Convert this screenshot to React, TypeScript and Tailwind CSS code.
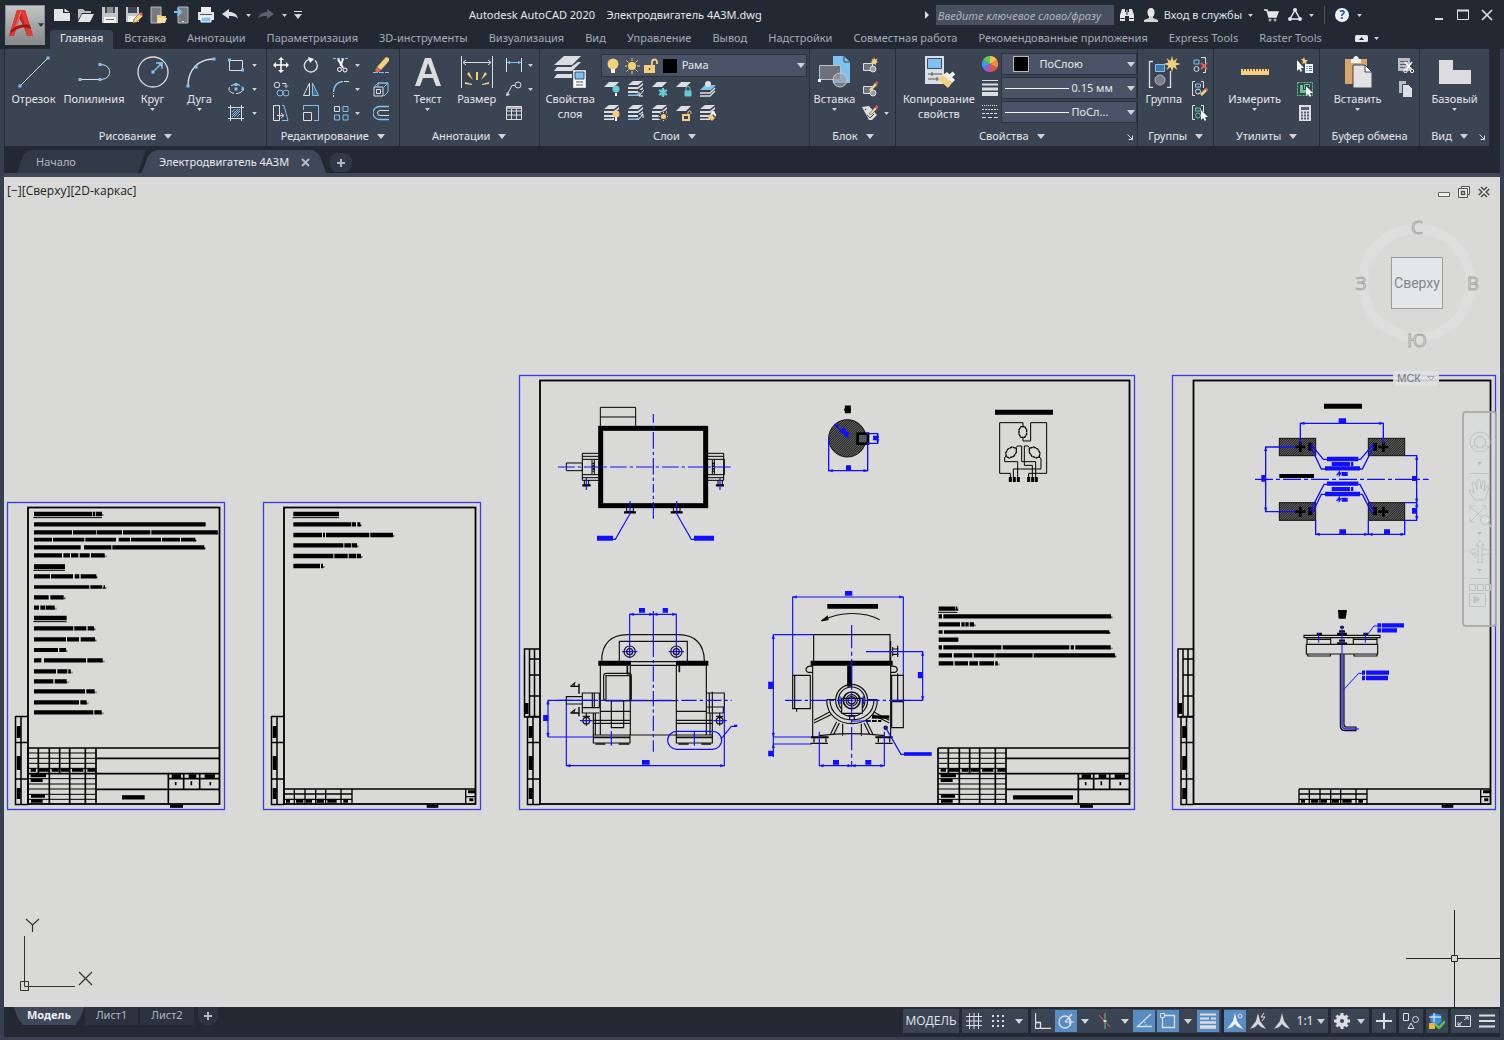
import { ReactNode } from "react"
import clsx from "clsx"

const W = "#dcdfe2"
const B = "#7fc1f0"
const Y = "#f6cf7c"
const R = "#e0605a"
const G = "#5fc98a"
const T = "#62cfd4"
const BLUE = "#1010ff"

/* ---------- shared bits ---------- */

interface IcoProps {
  s?: number
  children: ReactNode
}

function Ico({ s = 16, children }: IcoProps) {
  return (
    <svg width={s} height={s} viewBox={`0 0 ${s} ${s}`} fill="none" stroke={W} className="shrink-0" aria-hidden="true">
      {children}
    </svg>
  )
}

function Caret({ big = false }: { big?: boolean }) {
  return (
    <svg width={big ? 8 : 5} height={big ? 5 : 3} viewBox="0 0 8 5" className="shrink-0" aria-hidden="true">
      <path d="M0 0h8L4 5z" fill="#cfd3d8" />
    </svg>
  )
}

/* ---------- quick access toolbar ---------- */

const quickIcons: { name: string; icon: ReactNode }[] = [
  {
    name: "Создать",
    icon: (
      <Ico s={18}>
        <path d="M1 3h9v4h7v8H1z" fill="#e4e4e4" stroke="none" />
        <path d="M11.500 2.500l5 3.500h-5z" fill="#e4e4e4" stroke="none" />
      </Ico>
    ),
  },
  {
    name: "Открыть",
    icon: (
      <Ico s={18}>
        <path d="M1 3h5l2 2h6v2H5L1 14z" fill="#b9bdc2" stroke="none" />
        <path d="M5 8h12l-4 8H1z" fill="#e4e4e4" stroke="none" />
      </Ico>
    ),
  },
  {
    name: "Сохранить",
    icon: (
      <Ico s={18}>
        <path d="M1 1h16v16H1z" fill="#c3c5c8" stroke="none" />
        <path d="M4 1h10v6H4z" fill="#41464e" stroke="none" />
        <path d="M6 1h6v6H6z" fill="#8c9096" stroke="none" />
        <path d="M3 11h12v6H3z" fill="#f3f3f3" stroke="none" />
        <path d="M5 13.500h8" stroke="#666" />
      </Ico>
    ),
  },
  {
    name: "Сохранить как",
    icon: (
      <Ico s={18}>
        <path d="M1 1h13v15H1z" fill="#c3c5c8" stroke="none" />
        <path d="M3 1h9v6H3z" fill="#41464e" stroke="none" />
        <path d="M3 10h8v6H3z" fill="#f3f3f3" stroke="none" />
        <path d="M8 17l1-4 6-6 3 3-6 6z" fill={Y} stroke="#5d4b2d" strokeWidth=".6" />
        <path d="M14 8l2-2 2 2-2 2z" fill={R} stroke="none" />
      </Ico>
    ),
  },
  {
    name: "Открыть с мобильного",
    icon: (
      <Ico s={18}>
        <path d="M2 1h10v16H2z" fill="#777b80" stroke="#b5b8bc" />
        <path d="M8 9h4l1 1h4l-1 7H8z" fill={Y} stroke="none" />
        <path d="M10 12h8l-2 5H8z" fill="#ffe0a0" stroke="none" />
      </Ico>
    ),
  },
  {
    name: "Сохранить на мобильный",
    icon: (
      <Ico s={18}>
        <path d="M5 1h10v16H5z" fill="#777b80" stroke="#b5b8bc" />
        <path d="M9 15.500h2" />
        <path d="M1 6h6m-2.500-3.500L8 6 4.500 9.500" stroke={B} strokeWidth="2" />
      </Ico>
    ),
  },
  {
    name: "Печать",
    icon: (
      <Ico s={18}>
        <path d="M4 1h10v5H4z" fill="#f0f0f0" stroke="none" />
        <path d="M1 6h16v8H1z" fill="#e4e4e4" stroke="none" />
        <path d="M3 8.500h12" stroke="#555b64" />
        <path d="M4 11h10v5H4z" fill={B} stroke="#fff" />
      </Ico>
    ),
  },
]

function QuickToolbar() {
  return (
    <div className="flex items-center">
      {quickIcons.map((q) => (
        <button key={q.name} aria-label={q.name} className="flex h-6 w-6 items-center justify-center">
          {q.icon}
        </button>
      ))}
      <button aria-label="Отменить" className="flex h-6 w-9 items-center justify-between px-[3px]">
        <Ico s={18}>
          <path d="M1 8l7-5v3c5 0 8 2 9 7-2-3-5-3-9-3v3z" fill={W} stroke="none" />
        </Ico>
        <Caret />
      </button>
      <button aria-label="Повторить" className="flex h-6 w-9 items-center justify-between px-[3px]">
        <Ico s={18}>
          <path d="M17 8l-7-5v3c-5 0-8 2-9 7 2-3 5-3 9-3v3z" fill="#59616d" stroke="none" />
        </Ico>
        <Caret />
      </button>
      <button aria-label="Настройка панели" className="flex h-6 w-4 flex-col items-center justify-center gap-0.5">
        <span className="h-px w-2 bg-[#dcdfe2]" />
        <Caret big />
      </button>
    </div>
  )
}

function TitleBar() {
  return (
    <div className="flex h-[30px] items-center">
      <QuickToolbar />
      <h1 className="flex-1 whitespace-pre text-center text-[11px] text-[#e3e6ea]">
        Autodesk AutoCAD 2020{"    "}Электродвигатель 4АЗМ.dwg
      </h1>
      <svg width="5" height="8" viewBox="0 0 5 8" aria-hidden="true">
        <path d="M0 0l4 4-4 4z" fill={W} />
      </svg>
      <input
        aria-label="Поиск"
        placeholder="Введите ключевое слово/фразу"
        className="ml-1.5 h-5 w-[178px] bg-[#47505f] px-0.5 font-['Open_Sans'] text-[11px] italic text-white placeholder:text-[#b3b9c2]"
      />
      <button aria-label="Найти" className="flex h-6 w-[26px] items-center justify-center">
        <Ico>
          <path d="M3 2h3v3h1V3h2v2h1V2h3l2 6v6h-5V9H6v5H1V8z" fill="#e6e6e6" stroke="none" />
          <path d="M1.500 11.500h4M10.500 11.500h4M8 3v5" stroke="#222933" />
        </Ico>
      </button>
      <button className="flex h-6 items-center gap-1.5 pl-1 text-[11px] text-[#dde0e5]">
        <Ico s={14}>
          <ellipse cx="7" cy="4.500" rx="3.500" ry="4.500" fill="#e6e6e6" stroke="none" />
          <path d="M5 8h4v2l5 2v2H0v-2l5-2z" fill="#d2d4d6" stroke="none" />
        </Ico>
        Вход в службы
        <Caret />
      </button>
      <button aria-label="Магазин" className="ml-1.5 flex h-6 w-6 items-center justify-center">
        <Ico>
          <path d="M1 3h3l2 7h7l2-5H5" stroke="#e6e6e6" strokeWidth="1.500" />
          <path d="M5 5h10l-2 5H6z" fill="#e6e6e6" stroke="none" />
          <circle cx="7" cy="13" r="1" />
          <circle cx="12" cy="13" r="1" />
        </Ico>
      </button>
      <button aria-label="Autodesk" className="flex h-6 items-center gap-1.5 pl-1">
        <Ico>
          <path d="M8 3L3 12h10z" stroke="#dfe6f5" strokeWidth="1.500" />
          <circle cx="8" cy="3" r="2" fill="#dfe6f5" stroke="none" />
          <circle cx="3" cy="12" r="2" fill="#dfe6f5" stroke="none" />
          <circle cx="13" cy="12" r="2" fill="#dfe6f5" stroke="none" />
        </Ico>
        <Caret />
      </button>
      <span className="mx-2.5 h-[18px] w-px bg-[#4b5462]" />
      <button aria-label="Справка" className="flex h-6 items-center gap-2">
        <span className="flex h-[14px] w-[14px] items-center justify-center rounded-full bg-[#eef1f6] text-[12px] font-bold leading-none text-[#2353b5]">
          ?
        </span>
        <Caret />
      </button>
      <div className="ml-[68px] mr-2 flex items-center gap-1.5">
        <button aria-label="Свернуть" className="flex h-6 w-[18px] items-center justify-center">
          <Ico s={12}>
            <path d="M2 10h8" strokeWidth="2" />
          </Ico>
        </button>
        <button aria-label="Развернуть" className="flex h-6 w-[18px] items-center justify-center">
          <Ico s={12}>
            <path d="M.5 1.500h11v9H.5z" />
            <path d="M0 1.500h12" strokeWidth="2" />
          </Ico>
        </button>
        <button aria-label="Закрыть" className="flex h-6 w-[18px] items-center justify-center">
          <Ico s={12}>
            <path d="M1 1l10 10M11 1L1 11" strokeWidth="1.700" />
          </Ico>
        </button>
      </div>
    </div>
  )
}

const ribbonTabs = [
  "Главная",
  "Вставка",
  "Аннотации",
  "Параметризация",
  "3D-инструменты",
  "Визуализация",
  "Вид",
  "Управление",
  "Вывод",
  "Надстройки",
  "Совместная работа",
  "Рекомендованные приложения",
  "Express Tools",
  "Raster Tools",
]

function Header() {
  return (
    <header className="flex">
      <button
        aria-label="Меню приложения"
        className="ml-[5px] mt-[5px] flex h-10 w-10 items-center gap-1 border border-[#8b8d90] bg-gradient-to-b from-[#c4c5c6] to-[#86888a] pl-[3px]"
      >
        <svg width="25" height="28" viewBox="0 0 25 28" className="-mt-1" aria-hidden="true">
          <path d="M8 1h8l8 26h-6l-3-9-5-9-3 10-2 8H0z" fill="#c3221f" />
          <path d="M8 1l-8 26h5L12 5l3 8 3 14h6L16 1z" fill="#dd3b34" />
          <path d="M2 21c6-5 12-7 19-5l1 4C15 17 9 18 1 25z" fill="#a31715" />
          <path d="M12 2L7 17" stroke="#f0736b" />
        </svg>
        <svg width="6" height="4" viewBox="0 0 8 5" aria-hidden="true">
          <path d="M0 0h8L4 5z" fill="#333" />
        </svg>
      </button>
      <div className="ml-[5px] flex-1">
        <TitleBar />
        <nav className="flex h-[19px] items-stretch gap-px text-[11px] leading-[16px] text-[#a5abb4]">
          {ribbonTabs.map((t, i) => (
            <button
              key={t}
              className={clsx("whitespace-nowrap px-[10px] pb-[3px]", i === 0 && "rounded-t-sm bg-[#3b4453] text-[#eceef1]")}
            >
              {t}
            </button>
          ))}
          <button aria-label="Свернуть ленту" className="ml-[22px] flex items-center gap-1.5 pb-0.5">
            <svg width="13" height="7" viewBox="0 0 13 7" aria-hidden="true">
              <rect width="13" height="7" rx="1.500" fill="#e4e6e9" />
              <path d="M4 5h5L6.500 2z" fill="#222933" />
            </svg>
            <Caret />
          </button>
        </nav>
      </div>
    </header>
  )
}

/* ---------- ribbon ---------- */

interface PanelProps {
  title: string
  arrow?: boolean
  launcher?: boolean
  children: ReactNode
}

function Panel({ title, arrow = true, launcher, children }: PanelProps) {
  return (
    <section className="flex min-w-0 flex-col border-r border-[#262d38] bg-[#3b4453]">
      <div className="flex h-[78px] pt-1">{children}</div>
      <div className="flex h-[19px] items-center text-[11px] text-[#e3e6ea]">
        <button className="flex flex-1 items-center justify-center gap-2 whitespace-nowrap">
          {title}
          {arrow && <Caret big />}
        </button>
        {launcher && (
          <button aria-label={`${title}: параметры`} className="pr-1">
            <Ico s={6}>
              <path d="M.5.5l4.500 4.500M5.500 1.500v4h-4" />
            </Ico>
          </button>
        )}
      </div>
    </section>
  )
}

interface BigProps {
  label: string
  width: string
  caret?: boolean
  icon: ReactNode
}

function Big({ label, width, caret, icon }: BigProps) {
  return (
    <button className={clsx("flex shrink-0 flex-col items-center pt-[3px] text-[11px] leading-[15px] text-[#e3e6ea]", width)}>
      <svg width="32" height="32" viewBox="0 0 32 32" fill="none" stroke={W} className="mb-[3px] shrink-0" aria-hidden="true">
        {icon}
      </svg>
      <span className="whitespace-pre text-center">{label}</span>
      {caret && (
        <span className="mt-0.5">
          <Caret />
        </span>
      )}
    </button>
  )
}

function Small({ name, caret, children }: { name: string; caret?: boolean; children: ReactNode }) {
  return (
    <button aria-label={name} className="flex h-6 items-center gap-1.5 px-[7px]">
      <Ico>{children}</Ico>
      {caret && <Caret />}
    </button>
  )
}

function Dot({ x, y, s = 3 }: { x: number; y: number; s?: number }) {
  return <rect x={x - s / 2} y={y - s / 2} width={s} height={s} fill={B} stroke="none" />
}

function DrawPanel() {
  return (
    <Panel title="Рисование">
      <Big
        label="Отрезок"
        width="ml-1 w-[49px]"
        icon={
          <>
            <path d="M2 30L30 2" />
            <Dot x={2} y={30} />
            <Dot x={30} y={2} />
          </>
        }
      />
      <Big
        label="Полилиния"
        width="w-[72px]"
        icon={
          <>
            <path d="M2 23.500h20c13 0 13-15 0-15" />
            <Dot x={2} y={23.5} />
            <Dot x={22} y={23.5} />
            <Dot x={22} y={8.5} />
          </>
        }
      />
      <Big
        label="Круг"
        width="w-[45px]"
        caret
        icon={
          <>
            <circle cx="16" cy="16" r="15" strokeWidth="1.300" />
            <path d="M17 15l7-7M19 7h6v6" stroke={B} strokeWidth="1.400" />
            <path d="M21 7h4v4z" fill={B} stroke={B} />
            <Dot x={16} y={16} />
          </>
        }
      />
      <Big
        label="Дуга"
        width="w-[49px]"
        caret
        icon={
          <>
            <path d="M4 30C4 14 14 3 30 3" strokeWidth="1.300" />
            <Dot x={4} y={30} />
            <Dot x={12} y={11} />
            <Dot x={30} y={3} />
          </>
        }
      />
      <div className="[&>button]:gap-2 [&>button]:px-1">
        <Small name="Прямоугольник" caret>
          <path d="M1.500 3.500h13v10h-13z" />
          <Dot x={1.5} y={3} />
          <Dot x={14.5} y={13} />
        </Small>
        <Small name="Эллипс" caret>
          <ellipse cx="8" cy="8" rx="7" ry="4.500" strokeDasharray="9 2" />
          <Dot x={8} y={8} />
          <Dot x={15} y={8} />
          <Dot x={8} y={3.5} />
        </Small>
        <Small name="Штриховка" caret>
          <path d="M2.500 0v16M13.500 0v16M0 2.500h16M0 13.500h16" />
          <path d="M4 7l3-3M4 10l6-6M4 12l8-8M6 12l6-6M9 12l3-3" stroke={B} />
        </Small>
      </div>
    </Panel>
  )
}

function EditPanel() {
  return (
    <Panel title="Редактирование">
      <div className="grid grid-cols-[30px_30px_40px_30px] grid-rows-[24px_24px_24px] [&>button]:px-1.5">
        <Small name="Перенести">
          <path d="M8 2v12M2 8h12" strokeWidth="1.500" stroke="#fff" />
          <path d="M8 0l3 3H5zM8 16l3-3H5zM0 8l3-3v6zM16 8l-3-3v6z" fill="#fff" stroke="none" />
        </Small>
        <Small name="Повернуть">
          <path d="M12 3.500A6.500 6.500 0 1 1 6 2.300" strokeWidth="1.400" />
          <path d="M5 0l6 2-4 4z" fill="#fff" stroke="none" />
        </Small>
        <Small name="Обрезать" caret>
          <path d="M0 1.500h16" strokeDasharray="3 1" stroke={B} />
          <path d="M5 2l5 9M10 2L7.500 9" stroke="#fff" strokeWidth="2" />
          <circle cx="6.500" cy="12.500" r="2" stroke="#fff" />
          <circle cx="12" cy="13" r="2" stroke="#fff" />
        </Small>
        <Small name="Стереть">
          <path d="M13 0l3 1v3L8 13l-4-3z" fill={Y} stroke="none" />
          <path d="M4 10l4 3-2 2H3l-1-2z" fill={R} stroke="none" />
          <path d="M0 15.500h16" stroke={B} strokeDasharray="5 1" />
        </Small>
        <Small name="Копировать">
          <circle cx="4" cy="4" r="2.800" />
          <path d="M9 2.500h4v3m-2-1l2 2 2-2" />
          <circle cx="7" cy="12" r="3" stroke={B} />
          <circle cx="13" cy="12" r="3" stroke={B} />
        </Small>
        <Small name="Зеркало">
          <path d="M6.500 2v12.500h-6z" />
          <path d="M9.500 2v12.500h6z" stroke={B} fill="#3f6a8e" />
        </Small>
        <Small name="Сопряжение" caret>
          <path d="M.5 16v-4" strokeDasharray="2 1" />
          <path d="M.5 11C1 5 4 1 10 .5" stroke={B} strokeWidth="1.400" />
          <path d="M11 .5h5" />
        </Small>
        <Small name="Тело">
          <path d="M1 6h9v9H1zM3.500 8.500h4v4h-4z" />
          <path d="M1 6l4-4h10l-4 4M11 15l4-4V2M5 2v4M5 2h10" stroke={B} />
        </Small>
        <Small name="Растянуть">
          <path d="M.5.500h6v15h-6zM4 10.500h6M8 8l3 2.500L8 13" />
          <path d="M9 .5h2l4 15H9" stroke={B} />
        </Small>
        <Small name="Масштаб">
          <path d="M.5 7.500h8v8h-8z" />
          <path d="M.5 5V.5h15v15H11" stroke={B} />
        </Small>
        <Small name="Массив" caret>
          <path d="M1.500 1.500h5v5h-5z" />
          <path d="M10 1.500h5v5h-5zM1.500 10h5v5h-5zM10 10h5v5h-5z" stroke={B} />
        </Small>
        <Small name="Подобие">
          <path d="M16 1.500H6.500a6.500 6.500 0 0 0 0 13H16" stroke={B} strokeWidth="1.300" />
          <path d="M16 5.500H7a2.500 2.500 0 0 0 0 5h9" />
        </Small>
      </div>
    </Panel>
  )
}

function AnnotatePanel() {
  return (
    <Panel title="Аннотации">
      <Big
        label="Текст"
        width="ml-px w-[54px]"
        caret
        icon={<path d="M13 2h6l10 28h-5l-3-8H11l-3 8H3zM12.500 18h7.500L16 7z" fill="#dcdcdc" stroke="none" />}
      />
      <Big
        label="Размер"
        width="w-[44px]"
        icon={
          <>
            <path d="M.5 0v32M31.500 0v32M2 6.500h28M5 4L2 6.500 5 9M27 4l3 2.500L27 9" />
            <path d="M15 16h2v8h-2zM6 18l2-2 4 8zM26 18l-2-2-4 8zM4 28v-2l7 2v1zM28 28v-2l-7 2v1z" fill={Y} stroke="none" />
          </>
        }
      />
      <div>
        <Small name="Линейный размер" caret>
          <path d="M.5 1v14M15.500 1v14" />
          <path d="M1 5.500h14M4 4L2 5.500 4 7M12 4l2 1.500L12 7" stroke={B} />
        </Small>
        <Small name="Выноска" caret>
          <circle cx="12" cy="4" r="3" />
          <path d="M9 4.500H6L1 14" />
          <path d="M0 15l4-1-3-3z" fill={W} stroke="none" />
        </Small>
        <Small name="Таблица">
          <path d="M.5 1.500h15v13H.5zM.5 6h15M.5 10h15M5.500 4v10M10.500 4v10" />
          <path d="M.5 3h15" strokeWidth="1.500" />
        </Small>
      </div>
    </Panel>
  )
}

function Sheets({ tint = W }: { tint?: string }) {
  return (
    <>
      <path d="M5 0h10l-5 4H0z" fill={W} stroke="none" />
      <path d="M0 6h10l5-4v2l-5 4H0zM0 10h10l5-4v2l-5 4H0z" fill={W} stroke="none" />
      <path d="M0 13.500h8l2-1v2.500H0z" fill={tint} stroke="none" />
    </>
  )
}

function SheetTop() {
  return <path d="M5 1h10l-5 5H0z" fill={W} stroke="none" />
}

function LayersPanel() {
  return (
    <Panel title="Слои">
      <Big
        label={"Свойства\nслоя"}
        width="w-[61px]"
        icon={
          <>
            <path d="M10 0h17L18 9H0z" fill={W} stroke="none" />
            <path d="M3 11l-3 4h18l9-9h-3l-7 5zM3 18l-3 4h18v-4z" fill={W} stroke="none" />
            <path d="M19.500 14.500h12v17h-12z" fill="#fff" stroke="#d5d8db" />
            <path d="M21 16h9v7h-9z" fill={B} stroke="#35506e" />
            <path d="M22 26h7M22 29h7" stroke="#555" />
          </>
        }
      />
      <div className="flex-1 pr-0.5">
        <div className="mt-px flex h-[23px] items-center border border-[#2c3441] bg-[#4a5365] pl-1">
          <span className="flex w-full items-center gap-[3px]">
            <Ico>
              <circle cx="7" cy="6" r="5.500" fill={Y} stroke="none" />
              <path d="M5 11h4v4H5z" fill="#f4f4f4" stroke="none" />
            </Ico>
            <Ico>
              <circle cx="7" cy="8" r="4" fill={Y} stroke="none" />
              <path d="M7 0v3M7 13v3M-1 8h3M12 8h3M1.500 2.500l2 2M10.500 11.500l2 2M1.500 13.500l2-2M10.500 4.500l2-2" stroke={Y} />
            </Ico>
            <Ico>
              <path d="M0 7h11v8H0z" fill={Y} stroke="none" />
              <path d="M8 7V4a2.500 2.500 0 0 1 5 0v2" stroke={Y} strokeWidth="1.800" />
              <path d="M5.500 10v2" stroke="#6b5520" strokeWidth="1.500" />
            </Ico>
            <span className="h-[14px] w-[14px] bg-black" />
            <select aria-label="Слой" className="min-w-0 flex-1 appearance-none bg-transparent pl-0.5 text-[11px] text-[#e3e6ea]">
              <option>Рама</option>
            </select>
            <span className="pr-px">
              <Caret big />
            </span>
          </span>
        </div>
        <div className="grid grid-cols-[24px_24px_24px_24px_24px] [&>button]:px-[3px]">
          <Small name="Отключить слой">
            <SheetTop />
            <circle cx="12" cy="8" r="3.500" fill={T} stroke="none" />
            <path d="M12 12v3" stroke="#fff" strokeWidth="2" />
          </Small>
          <Small name="Изолировать слой">
            <Sheets tint={B} />
            <path d="M10 9h6v7h-6z" fill="#3b4453" stroke="none" />
            <path d="M16 9l-5 6M11 11v4h4" stroke="#fff" />
          </Small>
          <Small name="Заморозить слой">
            <SheetTop />
            <path d="M11 7v9M7 9l8 5M15 9l-8 5" stroke={T} strokeWidth="2" />
            <circle cx="11" cy="11.500" r="3" stroke={T} />
          </Small>
          <Small name="Заблокировать слой">
            <SheetTop />
            <path d="M9 10h6v5H9z" fill={T} stroke={T} />
            <path d="M10 10V7.500a2 2 0 0 1 4 0V10" stroke={T} />
          </Small>
          <Small name="Сделать текущим">
            <path d="M5 4h11l-5 5H0z" fill={B} stroke="none" />
            <circle cx="8" cy="3" r="3" fill={W} stroke="none" />
            <path d="M0 12h10l5-5M0 15h10l5-5" strokeWidth="1.400" />
          </Small>
          <Small name="Включить все слои">
            <Sheets />
            <circle cx="12" cy="9" r="3.500" fill={Y} stroke="none" />
            <path d="M12 12v4" stroke="#fff" strokeWidth="2" />
          </Small>
          <Small name="Отменить изоляцию">
            <Sheets tint={B} />
            <path d="M10 8h6v8h-6z" fill="#3b4453" stroke="none" />
            <path d="M10 15l5-6M11 9h4v4" stroke="#fff" />
          </Small>
          <Small name="Разморозить слои">
            <Sheets />
            <circle cx="11.500" cy="11.500" r="5" fill="#3b4453" stroke="none" />
            <circle cx="11.500" cy="11.500" r="2.500" fill={Y} stroke="none" />
            <path d="M11.500 7v9M7 11.500h9M8.500 8.500l6 6M14.500 8.500l-6 6" stroke={Y} strokeDasharray="1 1" />
          </Small>
          <Small name="Разблокировать слой">
            <SheetTop />
            <path d="M7 10h6v5H7z" fill="#3b4453" stroke={Y} strokeWidth="2" />
            <path d="M12 9V7.500a1.500 1.500 0 0 1 3 0V9" stroke={Y} />
          </Small>
          <Small name="Согласовать слои">
            <Sheets />
            <path d="M7 11l4-2 4 4-3 3z" fill={Y} stroke="none" />
            <path d="M11 9l2-2 3 4" stroke="#fff" strokeWidth="2" />
          </Small>
        </div>
      </div>
    </Panel>
  )
}

function BlockPanel() {
  return (
    <Panel title="Блок">
      <Big
        label="Вставка"
        width="w-[48px]"
        caret
        icon={
          <>
            <path d="M15 0h11l6 6v21H15z" fill={B} stroke="none" />
            <path d="M26 0v6h6" stroke="#3b4453" />
            <path d="M1.500 9.500h21v14h-21z" fill="#6d7179" stroke="#b9bdc2" />
            <circle cx="22" cy="24" r="7" fill="#9a9ea5" fillOpacity=".65" stroke="#c7cacd" />
            <path d="M0 23h3v3H0z" fill="#fff" stroke="none" />
          </>
        }
      />
      <div className="[&>button]:px-1">
        <Small name="Создать блок">
          <path d="M1.500 6.500h9v7h-9z" fill="#6d7179" />
          <circle cx="11" cy="12" r="3" fill="#9a9ea5" />
          <path d="M12 0l1 2.500 2.500-1-1 2.500 1.500 1-2 1 0 2-2-1-2 1 .5-2-2-1 2-1-1-2 2 .5z" fill={Y} stroke="none" />
        </Small>
        <Small name="Редактировать блок">
          <path d="M1.500 5.500h9v7h-9z" fill="#6d7179" />
          <circle cx="11" cy="12" r="3" fill="#9a9ea5" />
          <path d="M7 9l6-7 2 2-6 6z" fill={Y} stroke="none" />
          <path d="M13 2l1.500-2 2 2L15 4z" fill={R} stroke="none" />
        </Small>
        <Small name="Атрибуты" caret>
          <path d="M0 2l7-1 8 9-5 5h-3z" fill={W} stroke="none" />
          <circle cx="3.500" cy="4.500" r="1" fill="#3b4453" />
          <path d="M7 9l6-7 2 2-6 6z" fill={Y} stroke="#3b4453" strokeWidth=".5" />
          <path d="M13 2l1.500-2 2 2L15 4z" fill={R} stroke="none" />
          <path d="M5 10l3 3 4-4" stroke="#3b4453" />
        </Small>
      </div>
    </Panel>
  )
}

function PropField({ label, color, value }: { label: string; color?: boolean; value: string }) {
  return (
    <div className="flex h-[22px] items-center gap-1.5 border border-[#2c3441] bg-[#4a5365] pl-[3px] pr-px">
      {color ? (
        <span className="ml-2 mr-1 h-4 w-4 border border-[#b5b8bc] bg-black" />
      ) : (
        <span className="h-px w-16 shrink-0 bg-[#f1f3f5]" />
      )}
      <select aria-label={label} className={clsx("min-w-0 flex-1 appearance-none bg-transparent text-[11px] text-[#e3e6ea]", !color && "-ml-1")}>
        <option>{value}</option>
      </select>
      <Caret big />
    </div>
  )
}

function PropsPanel() {
  return (
    <Panel title="Свойства" launcher>
      <Big
        label={"Копирование\nсвойств"}
        width="w-[85px]"
        icon={
          <>
            <path d="M2 0h19v28H2z" fill={W} stroke="none" />
            <path d="M4.500 2.500h14v10h-14z" fill={B} stroke="#35506e" />
            <path d="M5 18h14M5 23h14M9 16v4M14 21v4" stroke="#555" />
            <path d="M15 23l6-4 8 8-4 5z" fill={Y} stroke="none" />
            <path d="M20 19l4-3 8 8-3 3z" fill="#f1f1f1" stroke="none" />
            <path d="M25 22l6-5" stroke="#f1f1f1" strokeWidth="4" />
          </>
        }
      />
      <div className="flex flex-1 flex-col gap-0.5">
        <div className="flex items-center">
          <span className="pl-px pr-[3px]">
            <Ico>
              <path d="M8 8V0a8 8 0 0 1 7 4z" fill="#f2c14b" stroke="none" />
              <path d="M8 8l7-4a8 8 0 0 1 0 8z" fill="#f08a3c" stroke="none" />
              <path d="M8 8l7 4a8 8 0 0 1-7 4z" fill="#e0524d" stroke="none" />
              <path d="M8 8v8a8 8 0 0 1-7-4z" fill="#9b59d0" stroke="none" />
              <path d="M8 8l-7 4a8 8 0 0 1 0-8z" fill="#3f9be8" stroke="none" />
              <path d="M8 8L1 4a8 8 0 0 1 7-4z" fill="#5fc94f" stroke="none" />
            </Ico>
          </span>
          <div className="flex-1">
            <PropField label="Цвет" color value="ПоСлою" />
          </div>
        </div>
        <div className="flex items-center">
          <span className="pl-px pr-[3px]">
            <Ico>
              <path d="M0 .5h16" />
              <path d="M0 4.500h16" strokeWidth="2" />
              <path d="M0 9h16" strokeWidth="3" />
              <path d="M0 14h16" strokeWidth="4" />
            </Ico>
          </span>
          <div className="flex-1">
            <PropField label="Вес линий" value="0.15 мм" />
          </div>
        </div>
        <div className="flex items-center">
          <span className="pl-px pr-[3px]">
            <Ico>
              <path d="M0 1.500h16" strokeDasharray="1 1" />
              <path d="M0 5.500h16" strokeDasharray="2 1" />
              <path d="M0 9.500h16" strokeDasharray="3 1" />
              <path d="M0 13.500h16" strokeDasharray="4 2" />
            </Ico>
          </span>
          <div className="flex-1">
            <PropField label="Тип линий" value="ПоСл..." />
          </div>
        </div>
      </div>
    </Panel>
  )
}

function GroupPanel() {
  return (
    <Panel title="Группы">
      <Big
        label="Группа"
        width="w-[51px]"
        icon={
          <>
            <path d="M5 5.500H1.500v26H5M19 31.500h3.500V15" strokeWidth="1.300" />
            <path d="M7.500 8.500h9v7h-9z" fill="#3b78ab" stroke={B} />
            <circle cx="12" cy="24" r="5" fill="#7a7f87" stroke="#b0b4b9" />
            <path d="M24 0l1.500 5 4-3-2 4.500 5 1.500-5 1.500 2 4.500-4-3L24 16l-1.500-5-4 3 2-4.500-5-1.500 5-1.500-2-4.500 4 3z" fill={Y} stroke="none" />
          </>
        }
      />
      <div className="[&>button]:px-[3px]">
        <Small name="Разгруппировать">
          <path d="M9 .5h4.500v15H11" />
          <path d="M2 3h5v4H2z" stroke={B} />
          <circle cx="4.500" cy="12" r="2.500" />
          <path d="M9 6l6 6M15 6l-6 6" stroke={R} strokeWidth="2" />
        </Small>
        <Small name="Редактировать группу">
          <path d="M3 .5H.5v14H3M9 .5h2.500V7" />
          <path d="M3.500 3h5v3h-5z" stroke={B} />
          <circle cx="6" cy="10.500" r="2.500" />
          <path d="M8 13l5-5 2 2-5 5z" fill={Y} stroke="none" />
          <path d="M13 8l1.500-1 1.500 2-1 1z" fill={R} stroke={R} />
        </Small>
        <Small name="Выбор группы">
          <path d="M3 .5H.5v14H3M9 .5h2.500V7" />
          <path d="M3.500 3h5v3h-5z" stroke={G} />
          <circle cx="6" cy="10.500" r="2.500" stroke={G} />
          <path d="M9 5v10l2-2 2 3 1-1-1-3h3z" fill="#fff" stroke="none" />
        </Small>
      </div>
    </Panel>
  )
}

function UtilsPanel() {
  return (
    <Panel title="Утилиты">
      <Big
        label="Измерить"
        width="w-[81px]"
        caret
        icon={
          <>
            <path d="M2 13h28v6H2z" fill={Y} stroke="none" />
            <path d="M4.500 13v2M7.500 13v2M10.500 13v2M13.500 13v2M16.500 13v2M19.500 13v2M22.500 13v2M25.500 13v2M28.500 13v2" stroke="#5d4b2d" />
          </>
        }
      />
      <div className="[&>button]:px-0.5">
        <Small name="Быстрый выбор">
          <path d="M0 3v11l2-2 2 3 1-1-1-3h3z" fill="#fff" stroke="none" />
          <path d="M7 0l1 3 3 0-2 2 1 3-3-2-2 1 1-3-2-2h2z" fill={Y} stroke="none" />
          <path d="M8 7h8v9H8z" fill="#eef5fc" stroke="none" />
          <path d="M9.500 9.500h1M12 9.500h3M9.500 11.500h1M12 11.500h3M9.500 13.500h1M12 13.500h3" stroke="#3b78ab" />
        </Small>
        <Small name="Выбрать все">
          <path d="M.5 1.500h15v13H.5z" stroke={G} strokeDasharray="2 1" />
          <path d="M3 4h3v5h6v3H3z" fill={G} stroke="none" />
          <path d="M7.500 8V3.500h5V6" stroke={G} />
          <path d="M9 5v10l2-2 2 3 1-1-1-3h3z" fill="#fff" stroke="none" />
        </Small>
        <Small name="Калькулятор">
          <path d="M2 0h12v16H2z" fill={W} stroke="none" />
          <path d="M4 2h8v3H4z" fill="#59606b" stroke="none" />
          <path d="M4 7.500h8M4 10.500h8M4 13.500h8" stroke="#59606b" strokeWidth="2" strokeDasharray="2 1" />
        </Small>
      </div>
    </Panel>
  )
}

function ClipPanel() {
  return (
    <Panel title="Буфер обмена" arrow={false}>
      <Big
        label="Вставить"
        width="w-[75px]"
        caret
        icon={
          <>
            <path d="M3 3h22v25H3z" fill="#dba66a" stroke="none" />
            <path d="M9 3h2c1-4 5-4 6 0h2v4H9z" fill="#f1f1f1" stroke="none" />
            <path d="M11 9h12l7 7v16H11z" fill="#e2e2e2" stroke="#3b4453" />
            <path d="M23 9v7h7z" fill="#fff" stroke="#3b4453" />
          </>
        }
      />
      <div className="[&>button]:px-[3px]">
        <Small name="Вырезать">
          <path d="M0 1h12v13H0z" fill="#b9bdc2" stroke="none" />
          <path d="M2 4.500h8M2 7.500h6M2 10.500h5" stroke="#59606b" />
          <path d="M7 5l7 8M14 5l-6 8" stroke="#fff" strokeWidth="1.400" />
          <circle cx="7.500" cy="14" r="1.700" stroke="#fff" />
          <circle cx="14" cy="14" r="1.700" stroke="#fff" />
        </Small>
        <Small name="Копировать в буфер">
          <path d="M1 0h7v12H1z" fill="#b9bdc2" stroke="none" />
          <path d="M4.500 3.500h6l4 4v9h-10z" fill={W} stroke="#3b4453" />
        </Small>
      </div>
    </Panel>
  )
}

function Ribbon() {
  return (
    <div className="ml-px mr-[10px] grid grid-cols-[262fr_133fr_140fr_271fr_86fr_242fr_76fr_106fr_100fr_70fr] bg-[#3b4453]">
      <DrawPanel />
      <EditPanel />
      <AnnotatePanel />
      <LayersPanel />
      <BlockPanel />
      <PropsPanel />
      <GroupPanel />
      <UtilsPanel />
      <ClipPanel />
      <Panel title="Вид" launcher>
        <Big
          label="Базовый"
          width="w-full"
          caret
          icon={<path d="M0 4h14v10h18v14H0z" fill="#dcdcdc" stroke="none" />}
        />
      </Panel>
    </div>
  )
}

/* ---------- document tabs ---------- */

function DocTabs() {
  return (
    <div className="flex h-[31px] items-end border-b-[4px] border-[#3f4858] pl-[21px] text-[11px]">
      <button className="relative h-[23px] w-[125px] pl-[11px] pt-0.5 text-left text-[#b1b7c0] before:absolute before:inset-y-0 before:-left-1 before:right-2 before:-skew-x-[20deg] before:rounded-tl-lg before:bg-[#303946]">
        <span className="relative">Начало</span>
      </button>
      <div className="relative flex h-[23px] items-center gap-3 pl-[9px] pr-1 pt-0.5 text-[#e8eaed] before:absolute before:inset-y-0 before:-left-1 before:right-4 before:-skew-x-[20deg] before:rounded-tl-lg before:bg-[#3f4858] after:absolute after:inset-y-0 after:-right-2 after:left-4 after:skew-x-[20deg] after:rounded-tr-lg after:bg-[#3f4858]">
        <button className="relative z-10">Электродвигатель 4АЗМ</button>
        <button aria-label="Закрыть вкладку" className="relative z-10">
          <Ico s={9}>
            <path d="M1 1l7 7M8 1L1 8" stroke="#b3b9c2" strokeWidth="2" />
          </Ico>
        </button>
      </div>
      <button aria-label="Новая вкладка" className="mb-px ml-4 flex h-[19px] w-[22px] items-center justify-center rounded-lg bg-[#303946]">
        <Ico s={8}>
          <path d="M4 0v8M0 4h8" stroke="#b3b9c2" strokeWidth="2" />
        </Ico>
      </button>
    </div>
  )
}

/* ---------- drawing ---------- */

// Drawing groups are modelled at 3x and placed at their origin on the canvas
function At({ x, y, children }: { x: number; y: number; children: ReactNode }) {
  return <g transform={`translate(${x} ${y}) scale(0.33333)`}>{children}</g>
}

type Head = [number, number, "l" | "r" | "u" | "d"]

const headShapes = { l: "l12-4v8z", r: "l-12-4v8z", u: "l-4 12h8z", d: "l-4-12h8z" }

// Dimension line arrow heads
function Heads({ list }: { list: Head[] }) {
  return <path d={list.map(([x, y, dir]) => `M${x} ${y}${headShapes[dir]}`).join("")} fill={BLUE} stroke={BLUE} />
}

interface TextBar {
  x: number
  y: number
  to: number
  h?: number
  dash?: string
  under?: boolean
}

function Bars({ rows, color = "#000" }: { rows: TextBar[]; color?: string }) {
  return (
    <g stroke={color}>
      {rows.map((r, i) => (
        <g key={i}>
          <path d={`M${r.x} ${r.y}H${r.to}`} strokeWidth={r.h ?? 13} strokeDasharray={r.dash} />
          {r.under && <path d={`M${r.x - 2} ${r.y + 11}H${r.to}`} strokeWidth="3" />}
          {r.dash && <path d={`M${r.to - 6} ${r.y + 3}H${r.to + 5}`} strokeWidth="5" strokeDasharray="3 2" />}
        </g>
      ))}
    </g>
  )
}

const notesSheet1: TextBar[] = [
  { x: 102, y: 57, to: 306, dash: "174 2 8 2", under: true },
  { x: 102, y: 88, to: 617 },
  { x: 102, y: 112, to: 653, dash: "114 3 70 2 75 3 82 3 300" },
  { x: 102, y: 134, to: 586, h: 11, dash: "54 3 94 3 92 8 34 3 90 3" },
  { x: 102, y: 157, to: 613, dash: "140 10 82 3 300" },
  { x: 102, y: 181, to: 314, dash: "84 4 20 3 22 4 30 4" },
  { x: 102, y: 215, to: 195, h: 15, under: true },
  { x: 102, y: 244, to: 289, dash: "48 3 66 5 14 4 60" },
  { x: 102, y: 276, to: 315, h: 11, dash: "166 3 36 4" },
  { x: 102, y: 307, to: 192, dash: "44 5 40" },
  { x: 102, y: 338, to: 164, dash: "15 4 14 2 60" },
  { x: 102, y: 369, to: 200, under: true },
  { x: 102, y: 400, to: 282, dash: "118 3 36 4" },
  { x: 102, y: 433, to: 285, dash: "96 3 36 5" },
  { x: 102, y: 465, to: 198, h: 12, dash: "72 4 30" },
  { x: 102, y: 496, to: 308, dash: "22 8 126 4 60" },
  { x: 102, y: 529, to: 212, dash: "66 4 30 3" },
  { x: 102, y: 559, to: 200, dash: "58 4 60" },
  { x: 102, y: 589, to: 284, dash: "153 4 40" },
  { x: 102, y: 622, to: 260, dash: "135 4 40" },
  { x: 102, y: 652, to: 305, dash: "178 3 40" },
]

const notesSheet2: TextBar[] = [
  { x: 91, y: 57, to: 228, under: true },
  { x: 91, y: 88, to: 292, dash: "174 2 12 4" },
  { x: 91, y: 120, to: 390, dash: "86 3 6 3 130 3" },
  { x: 91, y: 151, to: 282, dash: "150 3 20 2" },
  { x: 91, y: 183, to: 294, dash: "120 3 40 3 22 2" },
  { x: 91, y: 213, to: 180, dash: "80 3" },
]

const notesSheet3: TextBar[] = [
  { x: 146, y: 56, to: 202, dash: "50 2", under: true },
  { x: 146, y: 79, to: 663, dash: "10 4 600" },
  { x: 146, y: 103, to: 252, dash: "64 4 10 2 10 3 60" },
  { x: 146, y: 126, to: 658, h: 11, dash: "12 4 600" },
  { x: 146, y: 149, to: 205 },
  { x: 146, y: 172, to: 662, dash: "10 4 174 4 200 4" },
  { x: 146, y: 196, to: 675, dash: "40 5 56 4 62 3 112 3 300" },
  { x: 146, y: 220, to: 323, dash: "44 4 40 4 26 4" },
]

// Form 1 title block, origin at the inner frame corner
function TitleBlock({ x, y, nameFrom, nameTo }: { x: number; y: number; nameFrom: number; nameTo: number }) {
  return (
    <At x={x} y={y}>
      <g stroke="#000" fill="none">
        <path
          d="M0 15H204M0 31H204M0 46H204M0 61H204M0 92H204M0 108H204M0 123H204M0 139H204M0 154H204"
          strokeWidth="3"
        />
        <path
          d="M0 0H576M204 31H576M0 77H576M421 92H576M204 124H576M0 0V170M31 0V77M64 0V170M95 0V77M125 0V170M172 0V170M204 0V170M421 77V170M467 77V124M515 77V124"
          strokeWidth="5"
        />
        <path d="M8 66H24M33 66H63M71 66H92M98 66H125M132 66H166M178 66H203M8 83H54M8 97H44M9 144H51M9 159H44" strokeWidth="10" />
        <path d="M431 85H459M482 85H505M530 85H561" strokeWidth="12" />
        <path d="M443 102V112M490 100V112M547 102V112" strokeWidth="5" />
        <path d={`M${nameFrom} 148H${nameTo}`} strokeWidth="13" />
        <path d="M426 175H465" strokeWidth="9" />
      </g>
    </At>
  )
}

// Form 2a title block used on continuation sheets
function SmallBlock({ x, y }: { x: number; y: number }) {
  return (
    <At x={x} y={y}>
      <g stroke="#000" fill="none">
        <path d="M0 0H576M0 15H204M0 31H204M0 0V47M31 0V47M63 0V47M95 0V47M125 0V47M171 0V47M204 0V47M545 0V47M545 23H576" strokeWidth="4" />
        <path d="M6 37H18M36 37H58M66 37H84M98 37H120M130 37H158M178 37H192M552 8H574M556 32H568" strokeWidth="9" />
        <path d="M428 52H463" strokeWidth="9" />
      </g>
    </At>
  )
}

function SideTable({ x, full }: { x: number; full?: boolean }) {
  return (
    <g transform={`translate(${x} 0)`} stroke="#000" fill="none">
      <path d="M-12.500 716.500H0M-12.500 716V804.500H0M-7 716V804M-12.500 742.500H0M-12.500 779H0" strokeWidth="1.500" />
      <path d="M-9.300 726V738M-9.300 756V770M-9.300 788V799" strokeWidth="4" />
      {full && (
        <>
          <path d="M0 649H-15.500V717H0M-10.500 649V717M-5.500 649V717M-10.500 659H0M-10.500 675H0M-10.500 696H0" strokeWidth="1.500" />
          <path d="M-13.500 703V714" strokeWidth="4" />
        </>
      )}
    </g>
  )
}

function Frame({ x, y, w, h, inner }: { x: number; y: number; w: number; h: number; inner: number }) {
  return (
    <g fill="none">
      <rect x={x} y={y} width={w} height={h} stroke="#3a3ae6" strokeWidth="1.300" />
      <rect x={x + inner} y={y + 5} width={w - inner - 5} height={h - 10.5} stroke="#000" strokeWidth="1.800" />
    </g>
  )
}

function TopView() {
  return (
    <At x={540} y={390}>
      <g fill="none" stroke="#000" strokeWidth="3">
        <path d="M181 108V52H287V108M181 81H287M79 219H127V242H79Z" />
        <path d="M127 190H175M127 271H175M127 190V271M127 199H175M127 208H175M127 254H175M127 263H175M156 210V252M163 210V252" />
        <path d="M504 190H551V271H504M504 199H551M504 208H553V254H504M504 263H551M517 210V252M523 210V252" />
        <path d="M160 218V245M520 218V245" strokeWidth="6" strokeDasharray="5 3" />
        <path d="M133 271V285H146V271M534 271V285H547V271M260 354V364H280V354M400 354V364H420V354" />
        <path d="M127 286H152M528 286H552M252 367H288M392 367H428" strokeWidth="7" />
        <rect x="182" y="115" width="315" height="232" strokeWidth="15" />
      </g>
      <g fill="none" stroke={BLUE} strokeWidth="3.500">
        <path d="M54 231H576" strokeDasharray="50 9 10 9" />
        <path d="M340 72V390" strokeDasharray="26 9 10 9 50 9 10 9 50 9 10 9" />
        <path d="M139 263V300M540 263V300M270 333V371L226 448H219M410 333V371L454 448H462" />
        <path d="M171 445H219M462 445H522" strokeWidth="15" />
      </g>
    </At>
  )
}

function MotorViews() {
  return (
    <At x={540} y={585}>
      <g fill="none" stroke="#111" strokeWidth="3.500">
        {/* side view */}
        <path d="M185 228C185 175 215 149 262 149H416C462 149 493 175 493 228M238 228V169H442V228" />
        <circle cx="269" cy="200" r="17" />
        <circle cx="269" cy="200" r="9" />
        <circle cx="409" cy="200" r="17" />
        <circle cx="409" cy="200" r="9" />
        <path d="M175 235H273M408 235H505" stroke="#000" strokeWidth="15" />
        <path d="M273 230H408M273 241H408M181 241V450M271 241V450M409 241V450M499 241V450M271 347H409M271 450H409M182 379H270M409 379H499M160 406H270M409 406H517M160 415H270M409 415H517" />
        <path d="M262 241V266H271M418 241V262" strokeWidth="5" />
        <rect x="191" y="265" width="83" height="82" rx="8" />
        <rect x="198" y="272" width="72" height="75" />
        <path d="M214 347H251V428H214ZM79 335H127V357H79ZM127 324H178V368H127ZM127 368V384H178M157 324V368M163 324V368M499 324H553V366H499M508 324V384M517 320V384M499 384H550V366" />
        <path d="M160 384V450M166 384V450M517 384V450M510 384V450" />
        <path d="M160 450H270V474H160ZM409 450H517V474H409Z" />
        <path d="M160 457H270M409 457H517M166 477H196M236 477H268M415 477H446M484 477H513" strokeWidth="5" />
        <circle cx="139" cy="407" r="10" />
        <circle cx="539" cy="407" r="10" />
        <path d="M139 384V422M128 394H150M539 384V422M528 394H550M92 304L104 294L102 304M92 384L104 374L102 384" />
        <path d="M117 296V326M117 366V394M92 304H117M92 384H117" strokeWidth="4" stroke="#000" />
        {/* end view */}
        <path d="M862 64H1014" strokeWidth="14" stroke="#000" />
        <path d="M1019 104C970 78 900 80 848 106" />
        <path d="M844 108L862 94L864 104Z" fill="#000" />
        <path d="M821 228V149H1050V228M1052 168V228M1058 186V214M1073 182V216M1058 192H1076M1058 208H1076" />
        <path d="M812 235H1058" strokeWidth="15" stroke="#000" />
        <path d="M929 242V305" strokeWidth="15" stroke="#000" />
        <path d="M818 242V455M1052 242V455M758 271H811V371H758ZM764 271V371M770 371V380M1055 271H1090V428H1055ZM1073 265V350M1055 350H1090M818 244C795 240 795 258 804 262H818M1052 244C1075 240 1075 258 1066 262H1052" />
        <circle cx="935" cy="346" r="48" />
        <circle cx="935" cy="346" r="40" />
        <path d="M860 344C860 440 1012 440 1012 344M870 344C870 425 1002 425 1002 344M860 344H888M984 344H1012" />
        <path d="M905 340H967V385H905Z" fill="#d9dad8" />
        <path d="M929 390V404M943 390V404M922 392H948" />
        <circle cx="935" cy="346" r="25" strokeWidth="5" />
        <circle cx="935" cy="346" r="17" />
        <circle cx="935" cy="346" r="11" strokeWidth="4" />
        <path d="M822 406L870 380M822 414L876 388M1048 406L1000 380M1048 414L996 388M872 446L890 410M880 450L898 414M998 446L980 410M990 450L972 414M908 452V416M964 452V416M836 452C900 444 970 444 1034 452" />
        <path d="M813 457H866M1006 457H1058" strokeWidth="6" stroke="#000" />
        <path d="M822 460V472M858 460V472M1015 460V472M1049 460V472M811 475H864M1006 475H1058" strokeWidth="4" />
        <path d="M996 396H1048" strokeWidth="10" stroke="#000" />
        <path d="M978 408H1024" strokeWidth="6" strokeDasharray="14 4" stroke="#000" />
        <circle cx="1037" cy="428" r="5" fill={BLUE} />
      </g>
      <g fill="none" stroke={BLUE} strokeWidth="3.500">
        <path d="M269 220V88H409V220M340 78V170M24 346V456M24 346H160M24 456H160M79 357V542H553V366M246 200H292M386 200H432M214 438V482M463 438V482M120 407H158M520 407H560" />
        <path d="M340 170V500M54 346H575" strokeDasharray="46 9 10 9" />
        <rect x="383" y="439" width="162" height="54" rx="27" />
        <path d="M543 462L574 424H590" />
        <path d="M758 270V36H1090V270M700 149H820M700 149V516M700 456H815M700 477H815M978 200H1148V346H1060M838 440V542H1033V440" />
        <path d="M735 346H1110" strokeDasharray="50 9 10 9" />
        <path d="M935 120V545" strokeDasharray="70 10 12 10" />
        <path d="M933 408H990M900 334V358M970 334V358M1037 428L1083 508H1092" />
        <path d="M297 76H315M368 76H384M306 532H329M915 25H937M879 532H897M976 532H994" strokeWidth="14" />
        <path d="M17 390V408M692 290V312M692 497V514M1141 261V280" strokeWidth="15" />
        <path d="M1092 507H1175" strokeWidth="11" />
        <path d="M582 422H592" strokeWidth="6" />
      </g>
      <Heads
        list={[
          [269, 88, "l"],
          [340, 88, "l"],
          [340, 88, "r"],
          [409, 88, "r"],
          [79, 542, "l"],
          [553, 542, "r"],
          [24, 346, "u"],
          [24, 456, "d"],
          [758, 36, "l"],
          [1090, 36, "r"],
          [700, 149, "u"],
          [700, 456, "d"],
          [700, 477, "u"],
          [1148, 200, "u"],
          [1148, 346, "d"],
          [838, 542, "l"],
          [935, 542, "l"],
          [935, 542, "r"],
          [1033, 542, "r"],
        ]}
      />
    </At>
  )
}

function ShaftAndSchema() {
  return (
    <At x={800} y={395}>
      <circle cx="142" cy="130" r="56" fill="url(#hatch)" stroke="#111" strokeWidth="3" />
      <g fill="none" stroke="#000">
        <path d="M137 34H150V52H137ZM132 44H153" strokeWidth="5" fill="#000" />
        <rect x="173" y="116" width="31" height="30" strokeWidth="8" fill="#55585a" />
        <path d="M585 52H759" strokeWidth="15" />
        <path
          d="M631 246V235H599V83H669V95M669 127V138H692V83H740V235H686V246M640 246V222H723V190L716 186M653 246V200H614V187L618 184M648 158L652 153H665V200H707V246M688 158L684 153H673V211H697V246"
          strokeWidth="3"
        />
        <path d="M663 95H674L680 104V118L674 127H663L657 118V104Z" strokeWidth="4" strokeDasharray="9 1" />
        <path d="M617 174L624 162L636 156L649 160V172L641 184L628 189L619 185Z" strokeWidth="4" strokeDasharray="9 1" />
        <path d="M720 174L713 162L701 156L688 160V172L696 184L709 189L718 185Z" strokeWidth="4" strokeDasharray="9 1" />
        <path d="M631 246V261M643 246V261M655 246V261M686 246V261M698 246V261M709 246V261" strokeWidth="9" />
      </g>
      <g fill="none" stroke={BLUE} strokeWidth="4">
        <path d="M86 130V227H203V145M200 116H233V145H200M103 88L146 129" />
        <path d="M124 102L144 122" strokeWidth="15" />
        <path d="M138 218H153M219 129H233" strokeWidth="14" />
      </g>
      <Heads
        list={[
          [86, 227, "l"],
          [203, 227, "r"],
          [233, 116, "u"],
          [233, 145, "d"],
          [103, 92, "l"],
        ]}
      />
    </At>
  )
}

function FoundationPlan() {
  return (
    <At x={1170} y={370}>
      <g fill="url(#hatch)" stroke="#111" strokeWidth="3">
        <rect x="328" y="205" width="109" height="52" />
        <rect x="595" y="205" width="109" height="52" />
        <rect x="328" y="398" width="109" height="53" />
        <rect x="595" y="398" width="109" height="53" />
      </g>
      <path d="M462 109H576" stroke="#000" strokeWidth="15" />
      <path d="M328 318H432" stroke="#000" strokeWidth="12" />
      <path
        d="M376 231H406M391 216V246M625 231H655M640 216V246M376 425H406M391 410V440M625 425H655M640 410V440"
        stroke="#000"
        strokeWidth="8"
      />
      <path d="M421 218V242M615 218V242M421 412V436M615 412V436" stroke="#000" strokeWidth="12" />
      <g fill="none" stroke={BLUE} strokeWidth="4">
        <path d="M255 328H776" strokeDasharray="54 9 12 9" />
        <path d="M391 222V160H640V222M376 231H287V425H376M704 257H740V451H704M704 398H740M437 451V493H704V451M595 451V493" />
        <path d="M422 222L460 268H472M422 230L454 297H466M611 222L571 268H560M611 230L577 297H566M426 432L454 373H466M420 424L462 343H472M607 432L577 373H566M612 424L570 343H560" />
        <path d="M506 152H528M508 485H528M642 485H660" strokeWidth="14" />
        <path d="M281 315V335M733 318V333M733 414V431" strokeWidth="14" />
        <path d="M471 267H565M465 295H570M471 341H565M465 372H570" strokeWidth="13" />
        <path d="M485 282H550M485 357H550" strokeWidth="12" strokeDasharray="55 3" />
        <path d="M500 316L508 306V316L514 307M500 393L508 383V393L514 384" strokeWidth="4" />
        <path d="M515 312H533M515 389H533" strokeWidth="12" />
      </g>
      <Heads
        list={[
          [391, 160, "l"],
          [640, 160, "r"],
          [287, 231, "u"],
          [287, 425, "d"],
          [740, 257, "u"],
          [740, 398, "d"],
          [740, 398, "u"],
          [740, 451, "d"],
          [437, 493, "l"],
          [595, 493, "l"],
          [595, 493, "r"],
          [704, 493, "r"],
        ]}
      />
      {/* anchor bolt section */}
      <path d="M504 720H531L527 746H506Z" fill="#000" />
      <g fill="none" stroke="#111" strokeWidth="3.500">
        <path d="M402 796H630V803H402ZM411 803V823M482 803V823M550 803V823M621 803V823M411 808H482M550 808H621M409 823H623V852H409ZM413 852V858H481V852M552 852V858H621V852" />
        <path d="M501 792H531M507 784H525M510 772H522M501 820H531M507 812H525M440 792H456M580 792H594" strokeWidth="7" />
        <path d="M511 852V1070C512 1078 518 1082 526 1082H558V1071H530C524 1071 522 1068 522 1062V852" fill="#8f90c4" />
      </g>
      <g fill="none" stroke={BLUE} strokeWidth="3">
        <path d="M516 766V1064C517 1074 522 1077 530 1077H567M446 790V818M586 790V818M590 797L612 768H622M520 960L566 910H576" />
        <path d="M622 766H702M622 781H681" strokeWidth="13" strokeDasharray="12 2 70" />
        <path d="M576 908H657M576 924H654" strokeWidth="13" strokeDasharray="9 3 70" />
      </g>
    </At>
  )
}

function Drawing() {
  return (
    <svg viewBox="4 177 1496 830" preserveAspectRatio="xMinYMin slice" className="absolute inset-0 h-full w-full" aria-hidden="true">
      <defs>
        <pattern id="hatch" width="5" height="5" patternUnits="userSpaceOnUse" patternTransform="rotate(45)">
          <rect width="5" height="5" fill="#6a6a69" />
          <path d="M1 0V5" stroke="#1d1d1d" strokeWidth="3" />
        </pattern>
      </defs>
      <Frame x={7.5} y={502.5} w={217} h={307} inner={20.5} />
      <Frame x={263.5} y={502.5} w={217} h={307} inner={20.5} />
      <Frame x={519.5} y={375.5} w={615} h={434} inner={20.5} />
      <Frame x={1172.5} y={375.5} w={323} h={434} inner={21} />
      <SideTable x={28} />
      <SideTable x={284} />
      <SideTable x={540} full />
      <SideTable x={1193.5} full />
      <TitleBlock x={28} y={748} nameFrom={282} nameTo={350} />
      <TitleBlock x={938} y={748} nameFrom={225} nameTo={405} />
      <SmallBlock x={284} y={789} />
      <SmallBlock x={1299} y={789} />
      <At x={0} y={495}>
        <Bars rows={notesSheet1} />
      </At>
      <At x={263} y={495}>
        <Bars rows={notesSheet2} />
      </At>
      <At x={890} y={590}>
        <Bars rows={notesSheet3} />
      </At>
      <TopView />
      <MotorViews />
      <ShaftAndSchema />
      <FoundationPlan />
      {/* UCS icon */}
      <g fill="none" stroke="#333">
        <path d="M24.500 936V986.500H75M20.500 981.500h8v9h-8z" />
        <path d="M26 919l6.500 6 6.500-6M32.500 925v7M79 972l13 13M92 972l-13 13" strokeWidth="1.200" />
      </g>
      {/* crosshair */}
      <path d="M1454.500 910V955M1454.500 962V1007M1406 958.500H1451M1458 958.500H1500M1451.500 955.500h6v6h-6z" fill="none" stroke="#222" />
    </svg>
  )
}

function ViewCube() {
  return (
    <div className="absolute right-[19px] top-[29px] h-[182px] w-[128px] text-[#a9aaa9]">
      <svg width="128" height="182" viewBox="0 0 128 182" className="absolute inset-0" aria-hidden="true">
        <circle cx="64" cy="77" r="54" fill="none" stroke="#dddedd" strokeWidth="10" />
        <g fill="#d9dad8" stroke="#a5a6a5" strokeWidth=".8" fontFamily="Open Sans, sans-serif" fontSize="19" textAnchor="middle">
          <text x="64" y="28">С</text>
          <text x="8" y="84">З</text>
          <text x="120" y="84">В</text>
          <text x="64" y="141">Ю</text>
        </g>
      </svg>
      <button className="absolute left-[38px] top-[51px] flex h-[52px] w-[52px] items-center justify-center border border-[#9b9c9b] bg-[#e4e6e7] font-['Roboto'] text-[14px] text-[#858789]">
        Сверху
      </button>
      <button className="absolute left-[40px] top-[165px] flex h-[15px] w-[46px] items-center justify-center gap-1.5 rounded-sm bg-[#e1e1e3]/90 font-['Liberation_Sans'] text-[11px] text-[#77787a]">
        МСК
        <svg width="8" height="5" viewBox="0 0 8 5" fill="none" stroke="#a9aaab" aria-hidden="true">
          <path d="M.5.500h7L4 4z" />
        </svg>
      </button>
    </div>
  )
}

function NavCaret() {
  return (
    <svg width="5" height="3" viewBox="0 0 5 3" aria-hidden="true">
      <path d="M0 0h5L2.500 3z" fill="#b8b9b8" />
    </svg>
  )
}

function NavIcon({ name, h = 24, children }: { name: string; h?: number; children: ReactNode }) {
  return (
    <button aria-label={name}>
      <svg width="24" height={h} viewBox={`0 0 24 ${h}`} fill="none" stroke="#bfc0bf" aria-hidden="true">
        {children}
      </svg>
    </button>
  )
}

function NavBar() {
  return (
    <div className="absolute right-[3px] top-[234px] flex h-[216px] w-[35px] flex-col items-center rounded border-2 border-[#a8a9aa]/90 bg-[#dcddde]/50 pt-[17px]">
      <NavIcon name="Штурвал">
        <circle cx="12" cy="12" r="10" />
        <circle cx="12" cy="12" r="5.500" />
        <path d="M3 18l4-3M21 18l-4-3" />
      </NavIcon>
      <span className="my-2">
        <NavCaret />
      </span>
      <span className="mb-1 h-px w-5 bg-[#c2c3c2]" />
      <NavIcon name="Панорамирование">
        <path d="M7 22l-6-9c1-2 2-1 5 2L4 5c1-2 2-1 3 0l2 6V2c1-1 2-1 3 0l1 9 2-8c1-1 2 0 2 1l-1 9 4-6c1 0 2 0 1 2l-4 13z" />
      </NavIcon>
      <NavIcon name="Зумирование" h={26}>
        <path d="M2 4l16 16M18 4L2 20M2 8V4h4M14 4h4v4M2 16v4h4" />
        <circle cx="17" cy="18" r="4.500" fill="#dcddde" />
        <path d="M20 21l3 4" strokeWidth="2" />
      </NavIcon>
      <span className="my-1">
        <NavCaret />
      </span>
      <NavIcon name="Орбита">
        <path d="M10 24V6H8l4-5 4 5h-2v18z" />
        <path d="M10 16C1 15-1 11 8 10M15 10c9 1 9 5 0 6M8 13l-4 2 4 4" />
      </NavIcon>
      <span className="my-1.5">
        <NavCaret />
      </span>
      <span className="mb-1 h-px w-5 bg-[#c2c3c2]" />
      <NavIcon name="ShowMotion">
        <path d="M1.500 1.500h6v6h-6zM9.500 1.500h6v6h-6zM17.500 1.500h5v6h-5zM1.500 10.500h16v13h-16z" />
        <path d="M6 13v7l6-3.500z" fill="#c4c5c4" />
      </NavIcon>
    </div>
  )
}

function Canvas() {
  return (
    <main className="relative min-h-0 flex-1 overflow-hidden bg-[#d9dad8]">
      <Drawing />
      <div className="relative flex items-start justify-between pl-[3px] pr-2.5 pt-[7px] font-['Open_Sans'] text-[12px] leading-[14px] text-[#222]">
        <div className="flex">
          <button>[−]</button>
          <button>[Сверху]</button>
          <button>[2D-каркас]</button>
        </div>
        <div className="flex items-center gap-2 pt-0.5">
          <button aria-label="Свернуть чертеж">
            <Ico s={12}>
              <path d="M.5 6.500h11v4H.5z" fill="#eee" stroke="#666" />
            </Ico>
          </button>
          <button aria-label="Восстановить чертеж">
            <Ico s={12}>
              <path d="M3.500.500h8v8h-8z" fill="#eee" stroke="#555" />
              <path d="M.5 2.500h9v9h-9z" fill="#eee" stroke="#555" />
              <path d="M3.500 5.500h3v3h-3z" stroke="#555" strokeWidth="1.500" />
            </Ico>
          </button>
          <button aria-label="Закрыть чертеж">
            <Ico s={12}>
              <path d="M2 2l8 8M10 2l-8 8" stroke="#444" strokeWidth="4.500" />
              <path d="M2 2l8 8M10 2l-8 8" stroke="#eee" strokeWidth="1.500" />
            </Ico>
          </button>
        </div>
      </div>
      <ViewCube />
      <NavBar />
    </main>
  )
}

/* ---------- status bar ---------- */

function StatusBtn({ name, on, w = "w-6", children }: { name: string; on?: boolean; w?: string; children: ReactNode }) {
  return (
    <button aria-label={name} className={clsx("flex h-[22px] items-center justify-center", w, on && "bg-[#5a8cc4]")}>
      {children}
    </button>
  )
}

function StatusGroup({ children }: { children: ReactNode }) {
  return <div className="flex h-6 items-center bg-[#3b4453]">{children}</div>
}

function More({ name, w = "w-4" }: { name: string; w?: string }) {
  return (
    <StatusBtn name={name} w={w}>
      <Caret big />
    </StatusBtn>
  )
}

const annoShape = "M8 0l2 8 6 8-5-2-3-3-3 3-5 2 6-8z"

function StatusBar() {
  return (
    <footer className="flex h-[33px] items-start justify-between border-b-[3px] border-[#36404e] pl-[13px] pr-px text-[11px] text-[#b1b7c0]">
      <div className="flex h-[18px]">
        <button className="relative px-[10px] pb-0.5 font-bold text-[#eceef1] before:absolute before:inset-0 before:right-2 before:skew-x-[20deg] before:rounded-bl-lg before:bg-[#3f4858] after:absolute after:inset-0 after:left-2 after:-skew-x-[20deg] after:rounded-br-lg after:bg-[#3f4858]">
          <span className="relative z-10">Модель</span>
        </button>
        <button className="ml-1 bg-[#2b333f] px-[11px] pb-0.5">Лист1</button>
        <button className="ml-0.5 bg-[#2b333f] px-[11px] pb-0.5">Лист2</button>
        <button aria-label="Новый лист" className="ml-1 flex w-5 items-center justify-center rounded-b-lg bg-[#2b333f]">
          <Ico s={8}>
            <path d="M4 0v8M0 4h8" stroke="#b3b9c2" strokeWidth="2" />
          </Ico>
        </button>
      </div>
      <div className="mt-0.5 flex gap-[3px]">
        <StatusGroup>
          <button className="w-14 font-['Open_Sans'] text-[12px] text-[#e3e6ea]">МОДЕЛЬ</button>
        </StatusGroup>
        <StatusGroup>
          <StatusBtn name="Сетка">
            <Ico>
              <path d="M3.500 0v16M8 0v16M12.500 0v16M0 3.500h16M0 8h16M0 12.500h16" />
            </Ico>
          </StatusBtn>
          <StatusBtn name="Привязка к сетке">
            <Ico>
              <path d="M2 3h12M2 8h12M2 13h12" strokeWidth="2" strokeDasharray="2 3" />
            </Ico>
          </StatusBtn>
          <More name="Параметры сетки" w="w-[18px]" />
        </StatusGroup>
        <StatusGroup>
          <StatusBtn name="Орто">
            <Ico>
              <path d="M.5 0v15.500H16M.5 9.500h5v6" strokeWidth="1.300" />
            </Ico>
          </StatusBtn>
          <StatusBtn name="Полярное отслеживание" on w="w-[22px]">
            <Ico>
              <circle cx="7" cy="9" r="6" strokeWidth="1.300" />
              <path d="M7 9h9M7 9l7-8M10 5c2 1 2 3 2 7" strokeWidth="1.200" />
            </Ico>
          </StatusBtn>
          <More name="Параметры полярного отслеживания" />
          <StatusBtn name="Изометрия">
            <Ico>
              <path d="M8 0v16" stroke={G} />
              <path d="M2 2l11 12" stroke={R} />
              <path d="M6.500 7h3v2h-3z" fill="#d8d8d8" stroke="none" />
            </Ico>
          </StatusBtn>
          <More name="Параметры изометрии" />
          <StatusBtn name="Объектное отслеживание" on w="w-[22px]">
            <Ico>
              <path d="M15 1L1.500 13.500H16" strokeWidth="1.300" />
              <path d="M8 8.500a5 5 0 0 1 2 4" strokeDasharray="2 1" />
            </Ico>
          </StatusBtn>
          <span className="w-0.5" />
          <StatusBtn name="Объектная привязка" on w="w-[22px]">
            <Ico>
              <path d="M3 2.500h11.500v12H2.500V4" strokeWidth="1.300" />
              <path d="M.5.500h4v4h-4z" fill="#5a8cc4" />
            </Ico>
          </StatusBtn>
          <More name="Параметры привязки" w="w-[18px]" />
          <StatusBtn name="Вес линий" on w="w-[22px]">
            <Ico>
              <path d="M0 1.500h16M0 5.500h9M11 5.500h5" strokeWidth="2" />
              <path d="M0 9.500h16" strokeWidth="2.500" />
              <path d="M0 14h16" strokeWidth="3.500" />
            </Ico>
          </StatusBtn>
          <span className="w-0.5" />
        </StatusGroup>
        <StatusGroup>
          <StatusBtn name="Аннотативные объекты" on w="w-[22px]">
            <Ico>
              <path d={annoShape} fill="#f4f4f4" stroke="none" />
              <circle cx="13" cy="3" r="2" />
            </Ico>
          </StatusBtn>
          <StatusBtn name="Автодобавление масштабов">
            <Ico>
              <path d={annoShape} fill="#d4d6d9" stroke="none" />
              <path d="M14 0l-3 4h4l-3 4" />
            </Ico>
          </StatusBtn>
          <StatusBtn name="Масштаб аннотаций">
            <Ico>
              <path d={annoShape} fill="#d4d6d9" stroke="none" />
            </Ico>
          </StatusBtn>
          <button className="flex h-[22px] w-[34px] items-center justify-center gap-1 text-[12px] text-[#e3e6ea]">
            1:1
            <Caret big />
          </button>
        </StatusGroup>
        <StatusGroup>
          <StatusBtn name="Рабочее пространство" w="w-[22px]">
            <Ico>
              <circle cx="8" cy="8" r="4" strokeWidth="4" />
              <path d="M8 0v3M8 13v3M0 8h3M13 8h3M2.500 2.500l2 2M11.500 11.500l2 2M2.500 13.500l2-2M11.500 4.500l2-2" strokeWidth="3" />
            </Ico>
          </StatusBtn>
          <More name="Список пространств" />
        </StatusGroup>
        <StatusGroup>
          <StatusBtn name="Добавить">
            <Ico>
              <path d="M8 0v16M0 8h16" strokeWidth="2" />
            </Ico>
          </StatusBtn>
        </StatusGroup>
        <StatusGroup>
          <StatusBtn name="Изоляция объектов">
            <Ico>
              <path d="M.5.500h5v7h-5zM5 15.500h6L8 10z" />
              <circle cx="12.500" cy="6.500" r="3" />
            </Ico>
          </StatusBtn>
        </StatusGroup>
        <StatusGroup>
          <StatusBtn name="Производительность графики" w="w-[22px]">
            <Ico>
              <path d="M1 1h12v12H1z" fill="#2a62ad" stroke="none" />
              <circle cx="7" cy="6" r="5.500" fill="#3f8bd6" stroke="none" />
              <path d="M5 0v9M0 4h12" stroke="#fff" />
              <path d="M0 10h6v6H0z" fill="#f0b53a" stroke="none" />
              <path d="M6 11l4 4 6-7" stroke="#5cc04a" strokeWidth="2.500" />
            </Ico>
          </StatusBtn>
        </StatusGroup>
        <StatusGroup>
          <StatusBtn name="Очистить экран">
            <Ico>
              <path d="M.5 2.500h15v11H.5zM9 7l4-3M10 4h3v3M7 9l-4 3M3 9v3h3" />
            </Ico>
          </StatusBtn>
          <StatusBtn name="Настройка">
            <Ico>
              <path d="M0 2.500h16M0 8h16M0 13.500h16" strokeWidth="2" />
            </Ico>
          </StatusBtn>
        </StatusGroup>
      </div>
    </footer>
  )
}

export default function App() {
  return (
    <div className="flex h-screen flex-col overflow-hidden bg-[#222933] font-['Noto_Sans','Open_Sans',sans-serif]">
      <Header />
      <div className="flex min-h-0 flex-1 flex-col border-x-4 border-[#36404e]">
        <Ribbon />
        <DocTabs />
        <Canvas />
        <StatusBar />
      </div>
    </div>
  )
}
